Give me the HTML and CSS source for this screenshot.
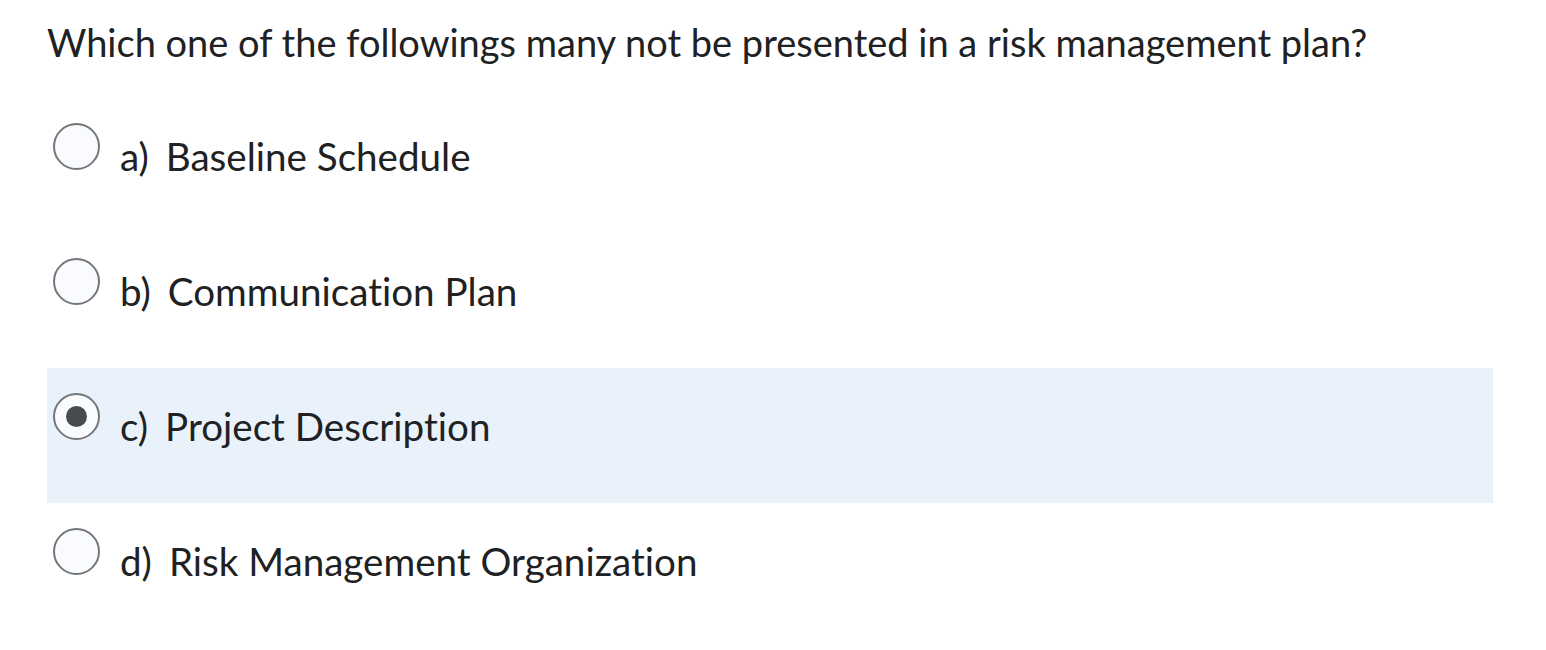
FILE: index.html
```html
<!DOCTYPE html>
<html>
<head>
<meta charset="utf-8">
<link rel="stylesheet" href="styles.css">
</head>
<body>
<div class="question">
  <h1 class="prompt">Which one of the followings many not be presented in a risk management plan?</h1>
  <div class="options">
    <label class="option">
      <span class="radio"></span>
      <span class="letter">a)</span>
      <span class="text">Baseline Schedule</span>
    </label>
    <label class="option">
      <span class="radio"></span>
      <span class="letter">b)</span>
      <span class="text">Communication Plan</span>
    </label>
    <label class="option selected">
      <span class="radio checked"></span>
      <span class="letter">c)</span>
      <span class="text">Project Description</span>
    </label>
    <label class="option">
      <span class="radio"></span>
      <span class="letter">d)</span>
      <span class="text">Risk Management Organization</span>
    </label>
  </div>
</div>
</body>
</html>
```

FILE: styles.css
```css
html, body {
  margin: 0;
  padding: 0;
  background: #ffffff;
}

body {
  font-family: Lato, "Liberation Sans", sans-serif;
  color: #202122;
  font-variant-ligatures: none;
}

.question {
  width: 1446px;
  padding-left: 47px;
}

.prompt {
  margin: 0;
  padding-top: 20px;
  height: 98px;
  box-sizing: border-box;
  font-size: 38px;
  font-weight: 400;
  line-height: 44px;
}

.options {
  display: flex;
  flex-direction: column;
}

.option {
  display: flex;
  align-items: flex-start;
  height: 135px;
  box-sizing: border-box;
  padding-top: 25px;
  padding-left: 6px;
  font-size: 38.6px;
  line-height: 44px;
}

.option.selected {
  background: #e9f1fb;
}

.radio {
  flex: none;
  width: 47px;
  height: 47px;
  box-sizing: border-box;
  border: 2px solid #737779;
  border-radius: 50%;
  background: #f9fbff;
  display: flex;
  align-items: center;
  justify-content: center;
  margin-right: 20px;
}

.radio.checked::after {
  content: "";
  width: 21px;
  height: 21px;
  border-radius: 50%;
  background: #494c4e;
}

.letter {
  margin-right: 17px;
  padding-top: 11px;
}

.text {
  padding-top: 11px;
}
```
